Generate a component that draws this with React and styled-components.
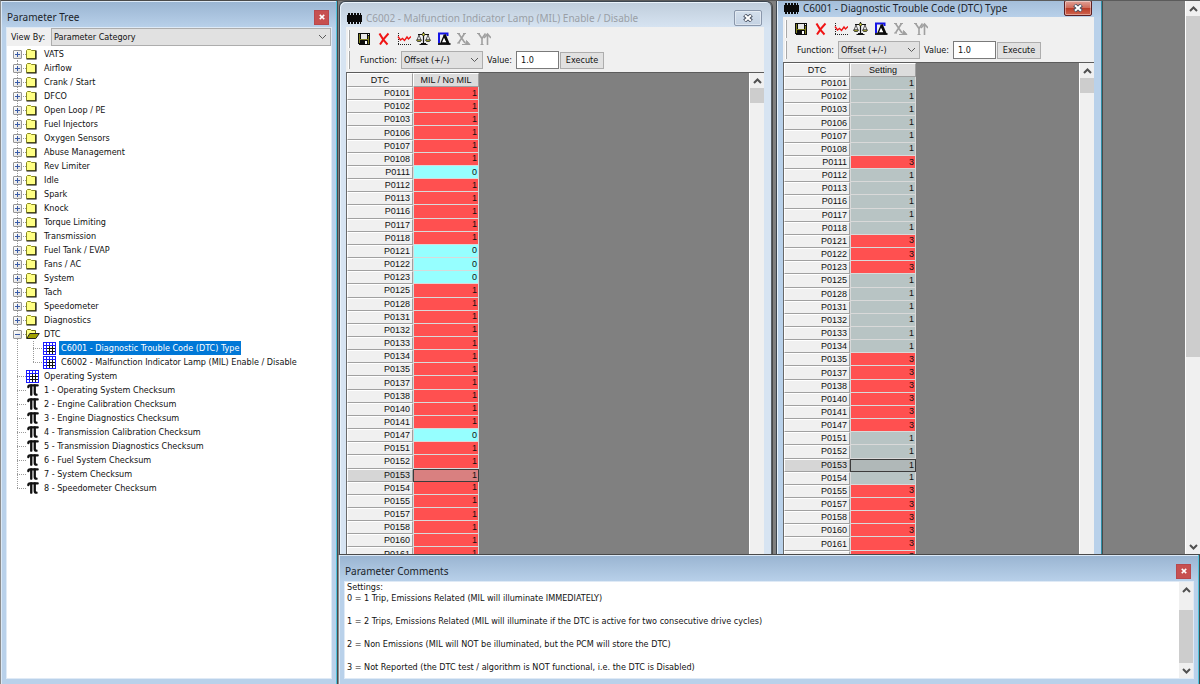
import React, { useState } from 'react';
import styled, { createGlobalStyle } from 'styled-components';
import { Pi } from 'lucide-react';

const GlobalStyle = createGlobalStyle`
  * {
    box-sizing: border-box;
  }

  body {
    margin: 0;
    background: #808080;
    color: #111;
    font-family: "DejaVu Sans Condensed", "DejaVu Sans", sans-serif;
    font-size: 9px;
    overflow: hidden;
  }

  button, input, select {
    font: inherit;
    color: inherit;
    margin: 0;
    padding: 0;
    border-radius: 0;
  }
`;

const Page = styled.main`
  display: grid;
  grid-template-columns: 338px minmax(0, 1fr);
  height: 100vh;
`;

const Main = styled.div`
  display: grid;
  grid-template-rows: minmax(0, 1fr) 130px;
  min-width: 0;
  min-height: 0;
`;

/* docked panels */

const Panel = styled.section`
  display: flex;
  flex-direction: column;
  min-height: 0;
  padding: 0 5px 5px;
  background: linear-gradient(#99b4d1, #b9d1ea 27px);
  border: 1px solid #4a4a4a;
  border-bottom: 0;
  border-left-color: #8c8c8c;
  box-shadow: inset -1px 0 #4fc3dc, inset 1px 1px #dce9f6;
`;

const PanelHeader = styled.header`
  display: flex;
  flex: none;
  align-items: center;
  justify-content: space-between;
  height: 26px;
  padding: 6px 3px 0 1px;
`;

const Title = styled.h2`
  margin: 0;
  font: 10px/16px "Noto Sans", sans-serif;
  white-space: nowrap;
  color: ${(props) => (props.$inactive ? '#9a9fa6' : '#1b1f2a')};
`;

const PanelClose = styled.button`
  display: flex;
  align-items: center;
  justify-content: center;
  width: 15px;
  height: 15px;
  border: 1px solid #b8474c;
  background: #c75050;
`;

const PanelBody = styled.div`
  display: flex;
  flex: 1;
  flex-direction: column;
  min-height: 0;
  background: #fff;
  border: 1px solid #dfeaf6;
`;

const ViewBar = styled.div`
  display: flex;
  flex: none;
  height: 18px;
  background: #f0f0f0;
`;

const ViewLabel = styled.label`
  width: 44px;
  padding-left: 4px;
  line-height: 18px;
`;

const SelectBox = styled.span`
  display: grid;
  flex: ${(props) => (props.$wide ? '1' : 'none')};
  width: ${(props) => (props.$wide ? 'auto' : '82px')};

  > * {
    grid-area: 1 / 1;
  }

  svg {
    align-self: center;
    justify-self: end;
    margin-right: 4px;
    pointer-events: none;
  }
`;

const Select = styled.select`
  appearance: none;
  width: 100%;
  height: 18px;
  padding: 0 2px;
  border: 1px solid #adadad;
  background: #e1e1e1;
`;

/* parameter tree */

const Tree = styled.ul`
  flex: 1;
  min-height: 0;
  margin: 0;
  padding: 1px 0 0 5px;
  list-style: none;
`;

const Branch = styled.ul`
  margin: 0;
  padding: 0;
  list-style: none;
`;

const TreeRow = styled.div`
  display: flex;
  align-items: center;
  height: 14px;
`;

const Gutter = styled.span`
  display: flex;
  flex: none;
  align-items: center;
  width: ${(props) => (props.$nested ? '15px' : '14px')};
  height: 14px;
  margin-left: ${(props) => (props.$nested ? '2px' : '0')};
  background-image:
    repeating-linear-gradient(#9a9a9a 0 1px, transparent 1px 2px),
    repeating-linear-gradient(90deg, #9a9a9a 0 1px, transparent 1px 2px);
  background-repeat: no-repeat;
  background-position: 5px ${(props) => (props.$from === 'middle' ? '7px' : '0')}, 5px 7px;
  background-size:
    1px ${(props) => (props.$to === 'middle' ? '7px' : '14px')},
    ${(props) => (props.$through ? '0' : '9px')} 1px;
`;

const Toggle = styled.button`
  display: flex;
  align-items: center;
  justify-content: center;
  width: 9px;
  height: 9px;
  margin-left: 1px;
  border: 1px solid #969696;
  border-radius: 1px;
  background: linear-gradient(135deg, #fff, #dcdcdc);
`;

const TreeIcon = styled.span`
  display: flex;
  flex: none;
  align-items: center;
  width: 14px;
  height: 14px;
  margin-right: 2px;
`;

const TreeLabel = styled.button`
  height: 14px;
  padding: 0 2px;
  border: 0;
  background: ${(props) => (props.$selected ? '#0078d7' : 'transparent')};
  color: ${(props) => (props.$selected ? '#fff' : '#111')};
  line-height: 14px;
  white-space: nowrap;
`;

/* scroll bars */

const ScrollTrack = styled.div`
  display: flex;
  flex: none;
  flex-direction: column;
  width: 15px;
  background: #f0f0f0;
  border-left: 1px solid #fff;
`;

const ScrollButton = styled.button`
  display: flex;
  flex: none;
  align-items: center;
  justify-content: center;
  height: 15px;
  border: 0;
  background: transparent;
`;

const ScrollLane = styled.div`
  flex: 1;
  min-height: 0;
`;

const ScrollThumb = styled.div`
  background: #cdcdcd;
`;

/* table windows */

const Desktop = styled.div`
  display: flex;
  min-width: 0;
  min-height: 0;
  background: #808080;
  border-top: 1px solid #5b5b5b;
`;

const Canvas = styled.div`
  position: relative;
  flex: 1;
  overflow: hidden;
`;

const Window = styled.section`
  position: absolute;
  top: ${(props) => props.$top}px;
  left: ${(props) => props.$left}px;
  bottom: 0;
  display: flex;
  flex-direction: column;
  width: ${(props) => props.$width}px;
  padding: 0 7px 0 6px;
  border: 1px solid #3c4650;
  border-bottom: 0;
  border-right-color: ${(props) => (props.$active ? '#2f8fa6' : '#5a6168')};
  border-radius: 6px 6px 0 0;
  background: ${(props) => (props.$active
    ? 'linear-gradient(#99b4d1, #b9d1ea 26px)'
    : 'linear-gradient(#bfcddb, #d7e4f2 26px)')};
  box-shadow: inset 1px 1px #eaf3fb, 1px 0 #4a4a4a;
`;

const WindowHeader = styled.header`
  display: flex;
  flex: none;
  align-items: center;
  gap: 4px;
  height: 25px;
  padding: 6px 1px 0;
`;

const WindowClose = styled.button`
  display: flex;
  align-items: center;
  justify-content: center;
  width: 28px;
  height: 16px;
  margin: 0 1px 0 auto;
  border: 1px solid ${(props) => (props.$active ? '#5c1f22' : '#8a97ab')};
  border-radius: 2px;
  background: ${(props) => (props.$active
    ? 'linear-gradient(#e0a197, #cf6a58 50%, #b83a26 50%, #d0644f)'
    : 'linear-gradient(#d3dfec, #c4d2e3)')};
  box-shadow: inset 0 0 0 1px rgba(255, 255, 255, 0.4);
`;

const WindowBody = styled.div`
  display: flex;
  flex: 1;
  flex-direction: column;
  min-height: 0;
  background: #f0f0f0;
`;

const Toolbar = styled.div`
  display: flex;
  flex: none;
  align-items: center;
  gap: 5px;
  height: 23px;
  padding-left: 2px;
`;

const Grip = styled.span`
  flex: none;
  width: 2px;
  height: 18px;
  margin-right: 1px;
  border-left: 1px solid #fff;
  border-right: 1px solid #a8a8a8;
`;

const ToolButton = styled.button`
  display: flex;
  align-items: center;
  justify-content: center;
  width: 15px;
  height: 15px;
  border: 0;
  background: transparent;
`;

const FunctionBar = styled.div`
  display: flex;
  flex: none;
  align-items: center;
  height: 20px;
  padding-left: 2px;
`;

const FieldLabel = styled.label`
  width: ${(props) => props.$width}px;
  padding-right: 4px;
  text-align: right;
  white-space: nowrap;
`;

const ValueInput = styled.input`
  width: 43px;
  height: 18px;
  padding: 0 4px;
  border: 1px solid #7a7a7a;
  background: #fff;
`;

const ExecuteButton = styled.button`
  width: 44px;
  height: 17px;
  margin-left: 1px;
  border: 1px solid #adadad;
  background: #e1e1e1;
`;

const GridArea = styled.div`
  display: flex;
  flex: 1;
  min-height: 0;
  margin-top: 2px;
  background: #808080;
  border-top: 1px solid #5c5c5c;
  border-left: 1px solid #696969;
  overflow: hidden;
`;

const GridSpace = styled.div`
  flex: 1;
  overflow: hidden;
`;

const Table = styled.table`
  width: 132px;
  height: ${(props) => props.$height}px;
  table-layout: fixed;
  border-collapse: separate;
  border-spacing: 0;
  background: #d9d9d9;
  font: 9px/11px "Liberation Sans", Arial, sans-serif;
`;

const HeadCell = styled.th`
  height: 13px;
  padding: 1px 0 0;
  border: 1px solid #a0a0a0;
  border-top-color: #fff;
  border-left-color: #fff;
  background: ${(props) => (props.$active ? '#dcdcdc' : '#f0f0f0')};
  font-weight: normal;
  line-height: 11px;
`;

const RowHead = styled.th`
  padding: 0 2px 0 0;
  border: 1px solid #a0a0a0;
  border-top-color: #fff;
  border-left-color: #fff;
  background: ${(props) => (props.$current ? '#d6d6d6' : '#f0f0f0')};
  font-weight: normal;
  text-align: right;
`;

const cellColors = {
  red: '#ff5050',
  cyan: '#96ffff',
  gray: '#b8c4c4',
};

const ValueCell = styled.td`
  padding: 0 1px 0 0;
  border: 1px solid #d9d9d9;
  border-color: ${(props) => (props.$current ? '#3c3c3c' : '#d9d9d9')};
  border-top-width: ${(props) => (props.$current ? '1px' : '0')};
  background: ${(props) => (props.$current ? props.$currentColor : cellColors[props.$tone])};
  text-align: right;
`;

/* comments */

const CommentRow = styled.div`
  display: flex;
  flex: 1;
  min-height: 0;
`;

const CommentText = styled.div`
  flex: 1;
  padding: 0 0 0 2px;
  line-height: 11px;

  p {
    margin: 0 0 12px;
  }
`;

const ArrowIcon = ({ down }) => (
  <svg width="9" height="6" viewBox="0 0 9 6" aria-hidden="true">
    <path d={down ? 'M1 1l3.5 3.5L8 1' : 'M1 5l3.5-3.5L8 5'} fill="none" stroke="#505050" strokeWidth="2" />
  </svg>
);

const ChevronIcon = () => (
  <svg width="9" height="6" viewBox="0 0 9 6" aria-hidden="true">
    <path d="M1 1l3.5 3.5L8 1" fill="none" stroke="#5a5a5a" />
  </svg>
);

const CloseIcon = ({ size = 6, outlined }) => (
  <svg width={size + 2} height={size} viewBox="0 0 10 8" aria-hidden="true">
    {outlined && <path d="M1.5 1l7 6M8.5 1l-7 6" stroke="#4a5364" strokeWidth="4" />}
    <path d="M2 1.2l6 5.6M8 1.2L2 6.8" stroke="#fff" strokeWidth="2" />
  </svg>
);

const ChipIcon = () => (
  <svg width="15" height="12" viewBox="0 0 15 12" shapeRendering="crispEdges" aria-hidden="true">
    <path d="M0 3h15v7H0z" fill="#0a0a0a" />
    <path d="M1 1h2v11H1zM4 1h2v11H4zM7 1h2v11H7zM10 1h2v11h-2zM13 1h1v11h-1z" fill="#0a0a0a" />
  </svg>
);

const FolderIcon = () => (
  <svg width="14" height="12" viewBox="0 0 14 12" aria-hidden="true">
    <path d="M.5 10.5v-8l1-1h3l1 1h4v8z" fill="#ffff84" stroke="#8a8a20" />
    <path d="M10 2.5v8.500H.500" fill="none" stroke="#111" strokeWidth="1.200" />
  </svg>
);

const OpenFolderIcon = () => (
  <svg width="14" height="12" viewBox="0 0 14 12" aria-hidden="true">
    <path d="M.5 10.5v-8l1-1h3l1 1h4v3" fill="#ffff84" stroke="#6d6d10" />
    <path d="M.8 10.500l3-5h9.500l-3.500 5z" fill="#a0a000" stroke="#222" />
  </svg>
);

const TableIcon = () => (
  <svg width="13" height="13" viewBox="0 0 13 13" shapeRendering="crispEdges" aria-hidden="true">
    <path d="M0 0h13v13H0z" fill="#fff" />
    <path d="M6.500 4v9M9.500 4v9M4 6.500h9M4 9.500h9" stroke="#111" />
    <path d="M.5.5h12v12H.5zM3.500 0v13M0 3.500h13M0 6.500h4M0 9.500h4M6.500 0v4M9.500 0v4" fill="none" stroke="#1a1aff" />
  </svg>
);

const PlusMinusIcon = ({ open }) => (
  <svg width="5" height="5" viewBox="0 0 5 5" shapeRendering="crispEdges" aria-hidden="true">
    <path d={open ? 'M0 2.500h5' : 'M0 2.500h5M2.500 0v5'} stroke="#3a5ca8" />
  </svg>
);

const SaveIcon = () => (
  <svg width="14" height="14" viewBox="0 0 14 14" shapeRendering="crispEdges">
    <path d="M1 1h12v12H2l-1-1z" fill="#0c0c0c" />
    <path d="M2 2h1v9H2zM11 4h1v8h-1zM3 7h8v1H3z" fill="#808020" />
    <path d="M4 2h6v5H4z" fill="#e8e8e8" />
    <path d="M8 9h2v3H8z" fill="#fff" />
    <path d="M11 2h1v1h-1z" fill="#fff" />
  </svg>
);

const DeleteIcon = () => (
  <svg width="14" height="14" viewBox="0 0 14 14">
    <path d="M2.500 1.500c2 4 4 7 8 11M11.500 1.500c-3 3-6 7-8.500 11" fill="none" stroke="#f01414" strokeWidth="2" />
  </svg>
);

const GraphIcon = () => (
  <svg width="14" height="14" viewBox="0 0 14 14">
    <path d="M1.500 1v12M1 12.500h13" stroke="#222" strokeDasharray="1 1" />
    <path d="M1 4.500l2.500 3.500 2-1.500 2 2L10 5l1.500 2L14 4.500" fill="none" stroke="#f01414" strokeWidth="1.400" />
  </svg>
);

const ScaleIcon = () => (
  <svg width="15" height="14" viewBox="0 0 15 14">
    <path d="M7.500 0v11M2 2.500h11M3.500 12.500h8M5 11.500h5" stroke="#111" strokeWidth="1.200" />
    <path d="M3 3L1 8h4zM12 3l-2 5h4z" fill="none" stroke="#333" strokeWidth=".8" />
    <path d="M.5 8h5L4.500 9.500h-3zM9.500 8h5l-1 1.500h-3z" fill="#e8e840" stroke="#222" strokeWidth=".8" />
    <circle cx="7.500" cy="2.500" r="1.300" fill="#e8e840" stroke="#111" strokeWidth=".7" />
  </svg>
);

const BoldDeltaIcon = () => (
  <svg width="14" height="14" viewBox="0 0 14 14">
    <path d="M2 11V1.500h8.500V4" fill="none" stroke="#1414e6" strokeWidth="2" />
    <path d="M7 4L4 11h6.500z" fill="#fff" stroke="#0a0a0a" strokeWidth="1.400" />
    <path d="M7.500 2.500L11.500 12" stroke="#0a0a0a" strokeWidth="2.400" />
    <path d="M1 12h12.500" stroke="#0a0a0a" strokeWidth="1.800" />
  </svg>
);

const XAxisIcon = () => (
  <svg width="15" height="14" viewBox="0 0 15 14">
    <path d="M2.500 1.500L9 11M8.500 1.500L2.500 11" fill="none" stroke="#a0a0a0" strokeWidth="1.600" />
    <path d="M1 1.500h3M7 1.500h3M1 11h3" stroke="#a0a0a0" />
    <path d="M6 12.500h8M10.500 8.500l3.500 4H9.500z" fill="#a0a0a0" stroke="#a0a0a0" />
  </svg>
);

const YAxisIcon = () => (
  <svg width="14" height="14" viewBox="0 0 14 14">
    <path d="M1.500 1.500l3.500 5 3.500-5M5 6v6.500" fill="none" stroke="#a0a0a0" strokeWidth="1.600" />
    <path d="M0 1.500h3M3.500 12.500h3" stroke="#a0a0a0" />
    <path d="M10.500 2v11M7 6l3.500-4L14 6" fill="none" stroke="#a0a0a0" strokeWidth="1.600" />
  </svg>
);

const tools = [
  { name: 'Save', icon: <SaveIcon /> },
  { name: 'Delete', icon: <DeleteIcon /> },
  { name: 'Graph', icon: <GraphIcon /> },
  { name: 'Compare', icon: <ScaleIcon /> },
  { name: 'Difference', icon: <BoldDeltaIcon /> },
  { name: 'X axis', icon: <XAxisIcon />, disabled: true },
  { name: 'Y axis', icon: <YAxisIcon />, disabled: true },
];

const folders = [
  'VATS', 'Airflow', 'Crank / Start', 'DFCO', 'Open Loop / PE', 'Fuel Injectors',
  'Oxygen Sensors', 'Abuse Management', 'Rev Limiter', 'Idle', 'Spark', 'Knock',
  'Torque Limiting', 'Transmission', 'Fuel Tank / EVAP', 'Fans / AC', 'System',
  'Tach', 'Speedometer', 'Diagnostics',
];

const dtcTables = [
  'C6001 - Diagnostic Trouble Code (DTC) Type',
  'C6002 - Malfunction Indicator Lamp (MIL) Enable / Disable',
];

const checksums = [
  '1 - Operating System Checksum',
  '2 - Engine Calibration Checksum',
  '3 - Engine Diagnostics Checksum',
  '4 - Transmission Calibration Checksum',
  '5 - Transmission Diagnostics Checksum',
  '6 - Fuel System Checksum',
  '7 - System Checksum',
  '8 - Speedometer Checksum',
];

const codes = [
  'P0101', 'P0102', 'P0103', 'P0106', 'P0107', 'P0108', 'P0111', 'P0112', 'P0113',
  'P0116', 'P0117', 'P0118', 'P0121', 'P0122', 'P0123', 'P0125', 'P0128', 'P0131',
  'P0132', 'P0133', 'P0134', 'P0135', 'P0137', 'P0138', 'P0140', 'P0141', 'P0147',
  'P0151', 'P0152', 'P0153', 'P0154', 'P0155', 'P0157', 'P0158', 'P0160', 'P0161',
];

const milOff = ['P0111', 'P0121', 'P0122', 'P0123', 'P0147'];

const notReported = [
  'P0111', 'P0121', 'P0122', 'P0123', 'P0135', 'P0137', 'P0138', 'P0140', 'P0141',
  'P0147', 'P0155', 'P0157', 'P0158', 'P0160', 'P0161', 'P0171',
];

const milRows = codes.map((code) => (
  milOff.includes(code) ? { code, value: 0, tone: 'cyan' } : { code, value: 1, tone: 'red' }
));

const typeRows = [...codes, 'P0171'].map((code) => (
  notReported.includes(code) ? { code, value: 3, tone: 'red' } : { code, value: 1, tone: 'gray' }
));

const ScrollBar = ({ before, thumb, after }) => (
  <ScrollTrack>
    <ScrollButton aria-label="Scroll up"><ArrowIcon /></ScrollButton>
    <ScrollLane style={{ flexGrow: before }} />
    <ScrollThumb style={{ flex: `${thumb} 0 0` }} />
    <ScrollLane style={{ flexGrow: after }} />
    <ScrollButton aria-label="Scroll down"><ArrowIcon down /></ScrollButton>
  </ScrollTrack>
);

const CutScrollBar = () => (
  <ScrollTrack>
    <ScrollButton aria-label="Scroll up"><ArrowIcon /></ScrollButton>
    <ScrollThumb style={{ height: 15 }} />
  </ScrollTrack>
);

const ParameterTree = () => {
  const [open, setOpen] = useState(true);
  const [selected, setSelected] = useState(dtcTables[0]);

  return (
    <Panel>
      <PanelHeader>
        <Title>Parameter Tree</Title>
        <PanelClose aria-label="Close parameter tree"><CloseIcon /></PanelClose>
      </PanelHeader>
      <PanelBody>
        <ViewBar>
          <ViewLabel htmlFor="view-by">View By:</ViewLabel>
          <SelectBox $wide>
            <Select id="view-by">
              <option>Parameter Category</option>
            </Select>
            <ChevronIcon />
          </SelectBox>
        </ViewBar>
        <Tree>
          {folders.map((name, index) => (
            <li key={name}>
              <TreeRow>
                <Gutter $from={index === 0 ? 'middle' : 'top'}>
                  <Toggle aria-label={`Expand ${name}`}><PlusMinusIcon /></Toggle>
                </Gutter>
                <TreeIcon><FolderIcon /></TreeIcon>
                <TreeLabel $selected={selected === name} onClick={() => setSelected(name)}>{name}</TreeLabel>
              </TreeRow>
            </li>
          ))}
          <li>
            <TreeRow>
              <Gutter>
                <Toggle aria-label="Toggle DTC" onClick={() => setOpen(!open)}>
                  <PlusMinusIcon open={open} />
                </Toggle>
              </Gutter>
              <TreeIcon><OpenFolderIcon /></TreeIcon>
              <TreeLabel $selected={selected === 'DTC'} onClick={() => setSelected('DTC')}>DTC</TreeLabel>
            </TreeRow>
            {open && (
              <Branch>
                {dtcTables.map((name, index) => (
                  <li key={name}>
                    <TreeRow>
                      <Gutter $through />
                      <Gutter $nested $to={index === dtcTables.length - 1 ? 'middle' : 'bottom'} />
                      <TreeIcon><TableIcon /></TreeIcon>
                      <TreeLabel $selected={selected === name} onClick={() => setSelected(name)}>{name}</TreeLabel>
                    </TreeRow>
                  </li>
                ))}
              </Branch>
            )}
          </li>
          <li>
            <TreeRow>
              <Gutter />
              <TreeIcon><TableIcon /></TreeIcon>
              <TreeLabel>Operating System</TreeLabel>
            </TreeRow>
          </li>
          {checksums.map((name, index) => (
            <li key={name}>
              <TreeRow>
                <Gutter $to={index === checksums.length - 1 ? 'middle' : 'bottom'} />
                <TreeIcon><Pi size={14} strokeWidth={4} color="#111" /></TreeIcon>
                <TreeLabel $selected={selected === name} onClick={() => setSelected(name)}>{name}</TreeLabel>
              </TreeRow>
            </li>
          ))}
        </Tree>
      </PanelBody>
    </Panel>
  );
};

const TableWindow = ({ id, title, column, rows, height, currentColor, active, top, left, width }) => {
  const [value, setValue] = useState('1.0');

  return (
    <Window $active={active} $top={top} $left={left} $width={width}>
      <WindowHeader>
        <ChipIcon />
        <Title $inactive={!active}>{title}</Title>
        <WindowClose $active={active} aria-label={`Close ${id}`}><CloseIcon size={8} outlined /></WindowClose>
      </WindowHeader>
      <WindowBody>
        <Toolbar>
          <Grip />
          {tools.map((tool) => (
            <ToolButton key={tool.name} aria-label={tool.name} disabled={tool.disabled}>{tool.icon}</ToolButton>
          ))}
        </Toolbar>
        <FunctionBar>
          <Grip />
          <FieldLabel $width={50} htmlFor={`${id}-function`}>Function:</FieldLabel>
          <SelectBox>
            <Select id={`${id}-function`}>
              <option>Offset (+/-)</option>
            </Select>
            <ChevronIcon />
          </SelectBox>
          <FieldLabel $width={33} htmlFor={`${id}-value`}>Value:</FieldLabel>
          <ValueInput id={`${id}-value`} value={value} onChange={(e) => setValue(e.target.value)} />
          <ExecuteButton>Execute</ExecuteButton>
        </FunctionBar>
        <GridArea>
          <GridSpace>
            <Table $height={height}>
              <thead>
                <tr>
                  <HeadCell>DTC</HeadCell>
                  <HeadCell $active>{column}</HeadCell>
                </tr>
              </thead>
              <tbody>
                {rows.map((row) => (
                  <tr key={row.code}>
                    <RowHead scope="row" $current={row.code === 'P0153'}>{row.code}</RowHead>
                    <ValueCell $tone={row.tone} $current={row.code === 'P0153'} $currentColor={currentColor}>
                      {row.value}
                    </ValueCell>
                  </tr>
                ))}
              </tbody>
            </Table>
          </GridSpace>
          <CutScrollBar />
        </GridArea>
      </WindowBody>
    </Window>
  );
};

const Comments = () => (
  <Panel>
    <PanelHeader>
      <Title>Parameter Comments</Title>
      <PanelClose aria-label="Close parameter comments"><CloseIcon /></PanelClose>
    </PanelHeader>
    <PanelBody>
      <CommentRow>
        <CommentText>
          <p>
            Settings:<br />
            0 = 1 Trip, Emissions Related (MIL will illuminate IMMEDIATELY)
          </p>
          <p>1 = 2 Trips, Emissions Related (MIL will illuminate if the DTC is active for two consecutive drive cycles)</p>
          <p>2 = Non Emissions (MIL will NOT be illuminated, but the PCM will store the DTC)</p>
          <p>3 = Not Reported (the DTC test / algorithm is NOT functional, i.e. the DTC is Disabled)</p>
        </CommentText>
        <ScrollBar before={13} thumb={55} after={0} />
      </CommentRow>
    </PanelBody>
  </Panel>
);

const App = () => (
  <>
    <GlobalStyle />
    <Page>
      <ParameterTree />
      <Main>
        <Desktop>
          <Canvas>
            <TableWindow
              id="c6002"
              title={dtcTables[1]}
              column="MIL / No MIL"
              rows={milRows}
              height={488}
              currentColor="#d98080"
              top={0}
              left={1}
              width={433}
            />
            <TableWindow
              id="c6001"
              title={dtcTables[0]}
              column="Setting"
              rows={typeRows}
              height={501}
              currentColor="#b0b8b8"
              active
              top={-10}
              left={438}
              width={326}
            />
          </Canvas>
          <ScrollBar before={0} thumb={342} after={182} />
        </Desktop>
        <Comments />
      </Main>
    </Page>
  </>
);

export default App;
